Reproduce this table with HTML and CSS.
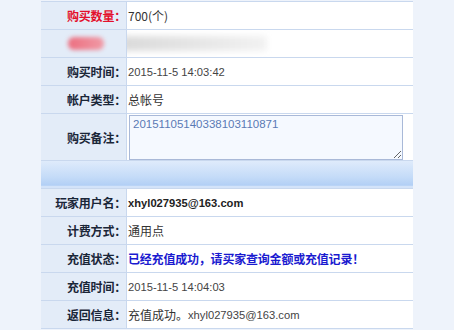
FILE: index.html
```html
<!DOCTYPE html>
<html lang="zh">
<head>
<meta charset="utf-8">
<link rel="stylesheet" href="styles.css">
</head>
<body>
<div class="page">
  <div class="grid">
    <div class="lbl red">购买数量：</div>
    <div class="val">700(个)</div>

    <div class="lbl blurcell"><span class="pink"></span></div>
    <div class="val blurcell"><span class="gray"></span></div>

    <div class="lbl">购买时间：</div>
    <div class="val num">2015-11-5 14:03:42</div>

    <div class="lbl">帐户类型：</div>
    <div class="val">总帐号</div>

    <div class="lbl">购买备注：</div>
    <div class="val top"><textarea class="note">20151105140338103110871</textarea></div>

    <div class="band"></div>

    <div class="lbl">玩家用户名：</div>
    <div class="val bold num">xhyl027935@163.com</div>

    <div class="lbl">计费方式：</div>
    <div class="val">通用点</div>

    <div class="lbl">充值状态：</div>
    <div class="val status">已经充值成功，请买家查询金额或充值记录！</div>

    <div class="lbl">充值时间：</div>
    <div class="val num">2015-11-5 14:04:03</div>

    <div class="lbl">返回信息：</div>
    <div class="val">充值成功。<span class="num">xhyl027935@163.com</span></div>
  </div>
</div>
</body>
</html>
```
FILE: styles.css
```css
html, body {
  margin: 0;
  padding: 0;
  background: #eef3fb;
  overflow: hidden;
}
.page {
  width: 454px;
  height: 330px;
  padding: 1px 0 0 41px;
  box-sizing: border-box;
  font-family: "Noto Sans CJK SC", "Liberation Sans", sans-serif;
  font-size: 12px;
}
.grid {
  display: grid;
  grid-template-columns: 85px 286px;
  grid-template-rows: 27px 27px 27px 27px 46px 27px 27px 27px 27px 27px 27px;
  gap: 1px;
  padding: 1px 0;
  background: #c9d8ee;
  width: 372px;
}
.lbl {
  background: #e3ecf8;
  color: #1a2638;
  font-weight: bold;
  display: flex;
  align-items: center;
  justify-content: flex-end;
  white-space: nowrap;
  letter-spacing: -0.2px;
}
.lbl.red {
  color: #e3102c;
}
.val {
  background: #ffffff;
  color: #333333;
  display: flex;
  align-items: center;
  padding-left: 1px;
  white-space: nowrap;
}
.val.top {
  align-items: flex-start;
}
.num {
  font-family: "Liberation Sans", Arial, sans-serif;
  font-size: 11.2px;
  color: #444;
}
.val.bold {
  font-weight: bold;
  color: #222;
}
.status {
  color: #1a1ad0;
  font-weight: bold;
  letter-spacing: -0.2px;
}
.note {
  width: 274px;
  height: 45px;
  box-sizing: border-box;
  margin: 1px 0 0 1px;
  border: 1px solid #a9b9d8;
  background: #f5f9ff;
  color: #5a7ab5;
  font-family: "Liberation Sans", Arial, sans-serif;
  font-size: 11.5px;
  padding: 2px 3px;
  resize: both;
  overflow: hidden;
}
.band {
  grid-column: 1 / -1;
  background: linear-gradient(#dfebfb 0%, #c4dbf8 60%, #b2cff5 90%, #d3e3f9 93%, #d3e3f9 100%);
}
.blurcell {
  overflow: hidden;
}
.pink {
  display: block;
  width: 36px;
  height: 13px;
  margin-right: 22px;
  border-radius: 6px;
  background: linear-gradient(90deg, #ec6f80, #f09aa6);
  filter: blur(2px);
}
.gray {
  display: block;
  width: 145px;
  height: 15px;
  margin-left: -6px;
  background: linear-gradient(90deg, #dadada, #e8e8e8 60%, #f2f2f2);
  filter: blur(3px);
}
```
